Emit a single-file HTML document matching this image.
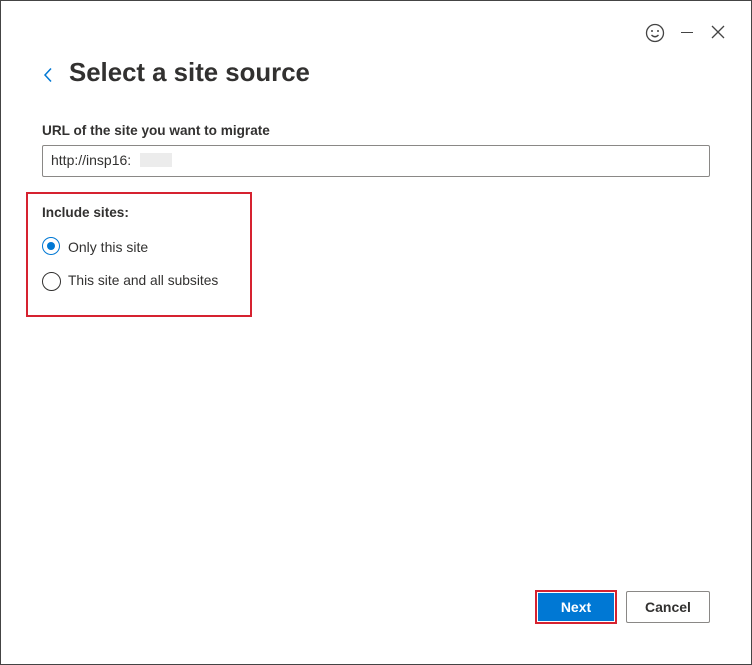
<!DOCTYPE html>
<html><head><meta charset="utf-8"><style>
html,body{margin:0;padding:0}
body{width:752px;height:665px;position:relative;background:#fff;font-family:"Liberation Sans",sans-serif;color:#323130;overflow:hidden}
.frame{position:absolute;left:0;top:0;width:750px;height:663px;border:1px solid #444}
.abs{position:absolute}
</style></head><body>
<div class="frame"></div>
<svg class="abs" style="left:644px;top:22px" width="22" height="22" viewBox="0 0 22 22"><circle cx="11" cy="11" r="8.5" fill="none" stroke="#444" stroke-width="1.3"/><circle cx="8" cy="9" r="1" fill="#444"/><circle cx="14" cy="9" r="1" fill="#444"/><path d="M7.5 13 Q11 16.5 14.5 13" fill="none" stroke="#444" stroke-width="1.3"/></svg>
<div class="abs" style="left:681px;top:32px;width:12px;height:1.3px;background:#444"></div>
<svg class="abs" style="left:711px;top:25px" width="14" height="14" viewBox="0 0 14 14"><path d="M1 1L13 13M13 1L1 13" stroke="#444" stroke-width="1.3"/></svg>
<svg class="abs" style="left:42px;top:67px" width="12" height="16" viewBox="0 0 12 16"><path d="M9 1.5L3 8l6 6.5" fill="none" stroke="#0078d4" stroke-width="1.5"/></svg>
<div class="abs" style="left:69px;top:59px;font-size:25.8px;font-weight:600;color:#323130">Select a site source</div>
<div class="abs" style="left:42px;top:123px;font-size:13.6px;font-weight:600">URL of the site you want to migrate</div>
<div class="abs" style="left:42px;top:145px;width:666px;height:30px;border:1px solid #8a8886;border-radius:2px"></div>
<div class="abs" style="left:51px;top:152px;font-size:14px">http://insp16:</div>
<div class="abs" style="left:140px;top:153px;width:32px;height:14px;background:#ececec"></div>
<div class="abs" style="left:26px;top:192px;width:222px;height:121px;border:2px solid #d62230"></div>
<div class="abs" style="left:42px;top:205px;font-size:13.6px;font-weight:600">Include sites:</div>
<div class="abs" style="left:42px;top:237px;width:18px;height:18px;border:1px solid #0078d4;border-radius:50%;box-sizing:border-box"></div>
<div class="abs" style="left:47px;top:242px;width:8px;height:8px;background:#0078d4;border-radius:50%"></div>
<div class="abs" style="left:68px;top:239px;font-size:14px">Only this site</div>
<div class="abs" style="left:42px;top:272px;width:19px;height:19px;border:1px solid #323130;border-radius:50%;box-sizing:border-box"></div>
<div class="abs" style="left:68px;top:273px;font-size:13.8px">This site and all subsites</div>
<div class="abs" style="left:535px;top:590px;width:78px;height:30px;border:2px solid #d62230;box-sizing:content-box"></div>
<div class="abs" style="left:538px;top:593px;width:76px;height:28px;background:#0078d4;color:#fff;font-size:14px;font-weight:600;text-align:center;line-height:28px">Next</div>
<div class="abs" style="left:626px;top:591px;width:82px;height:30px;border:1px solid #8a8886;border-radius:2px;font-size:14px;font-weight:600;text-align:center;line-height:30px">Cancel</div>
</body></html>
